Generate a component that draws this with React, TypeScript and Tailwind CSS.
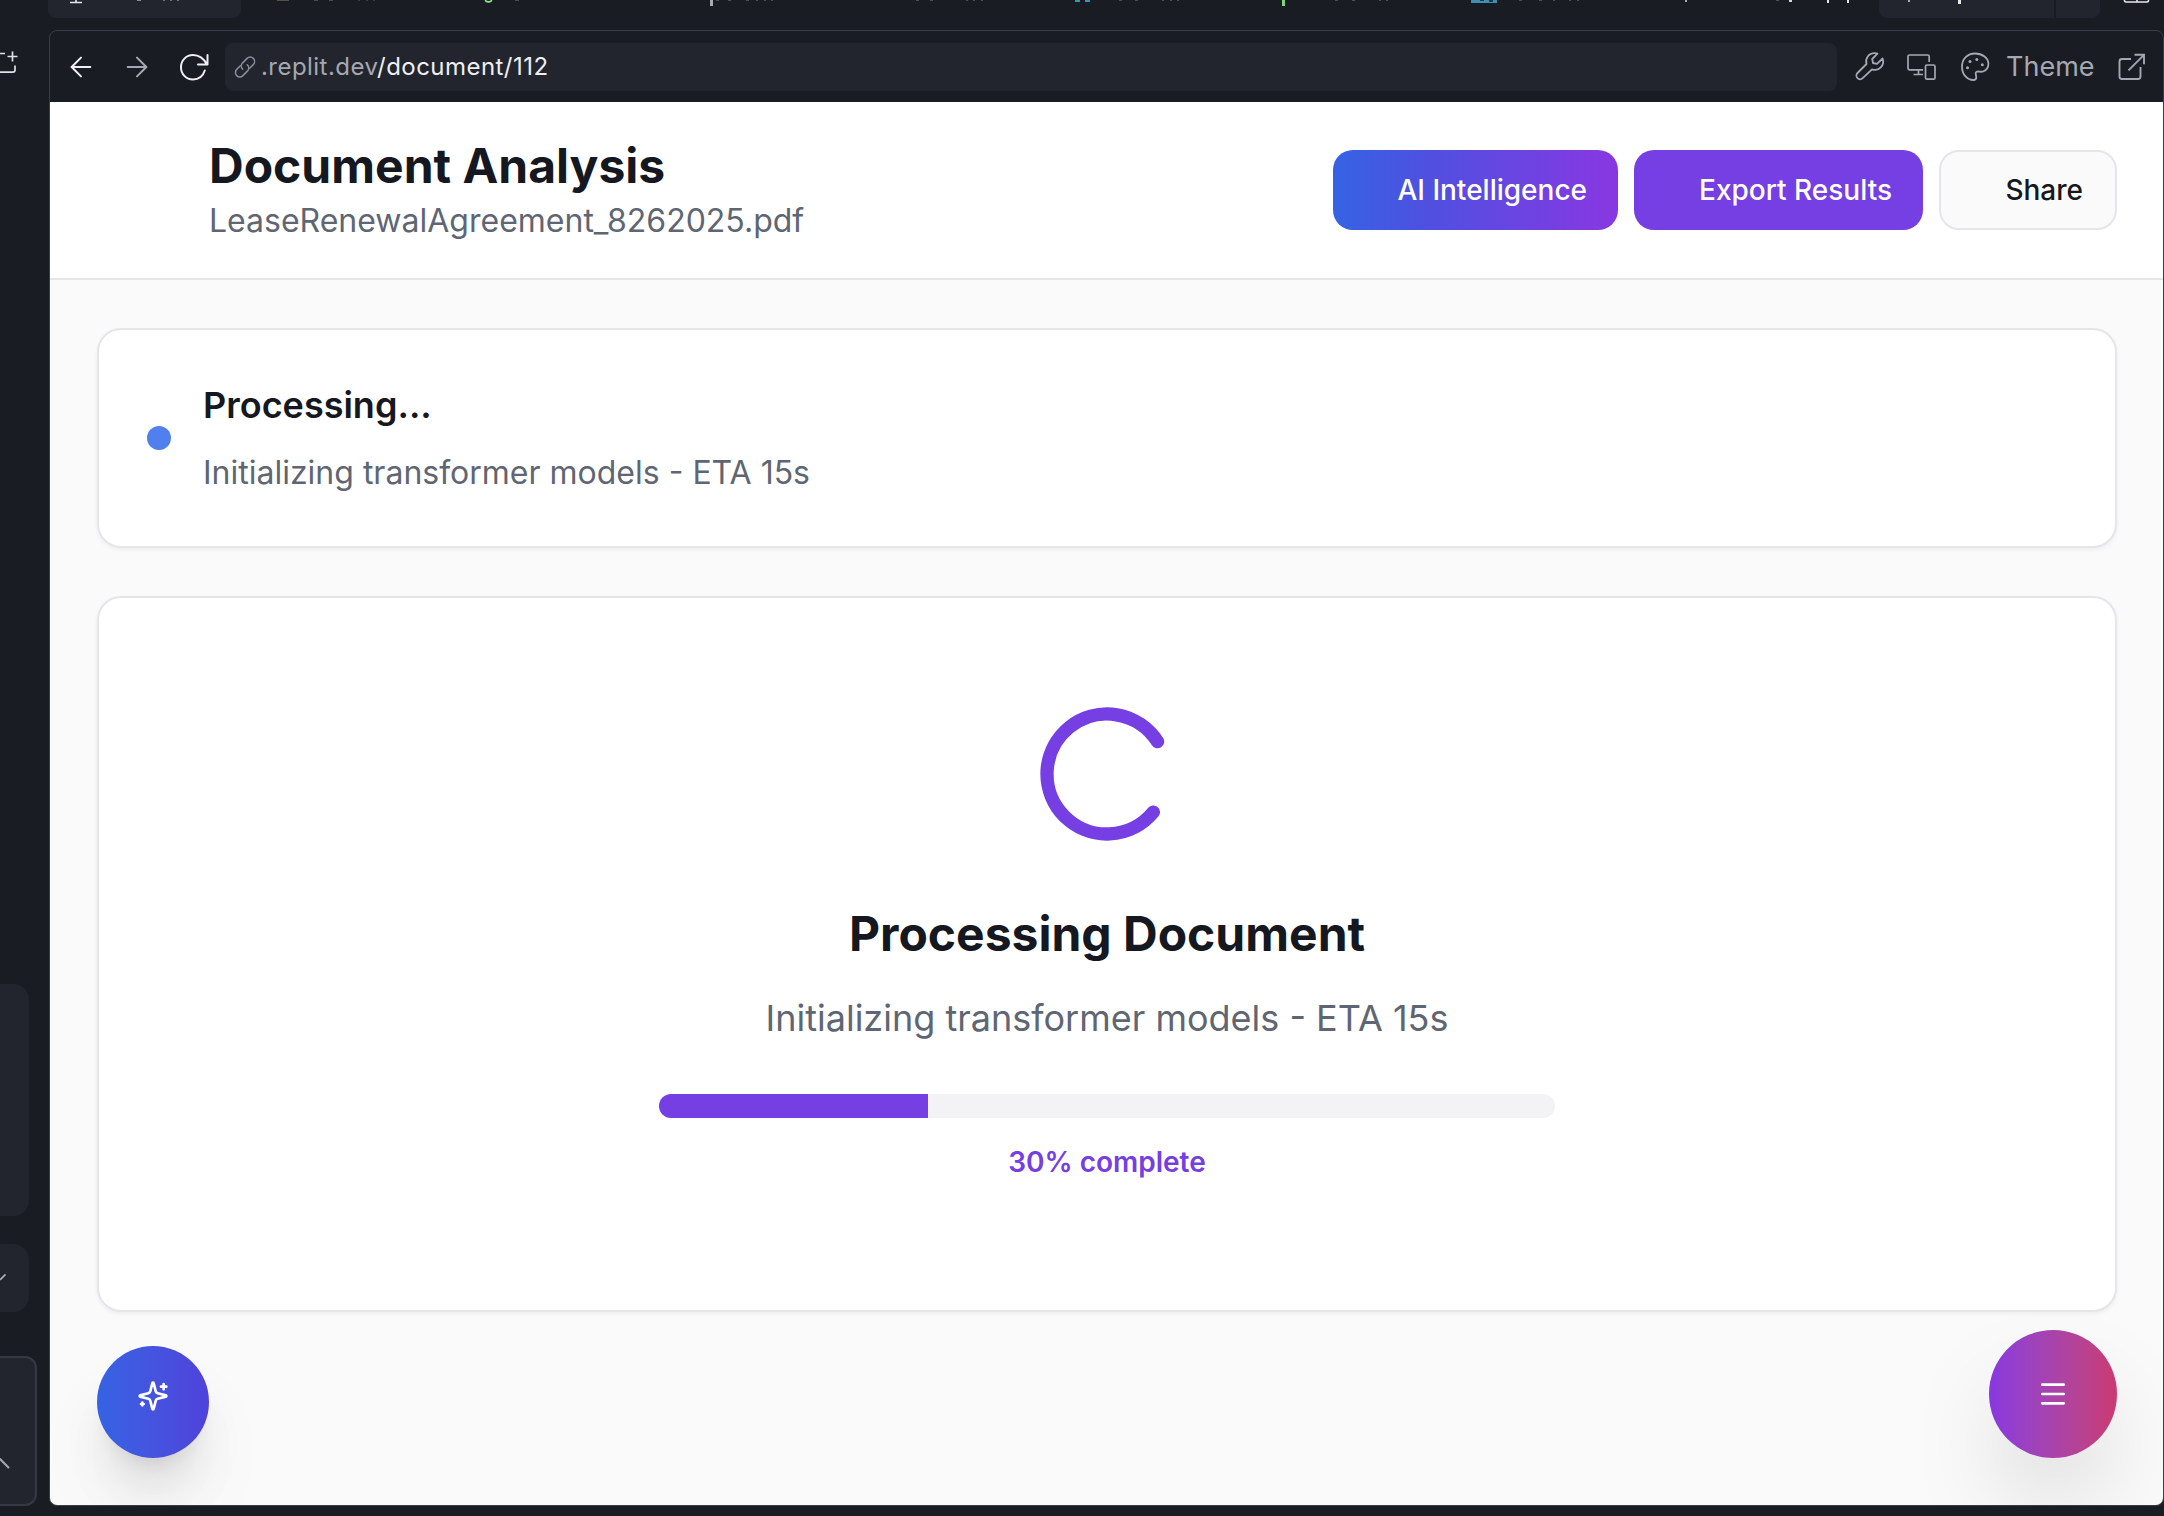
import React from "react";
import { ArrowLeft, ArrowRight, LoaderCircle, Menu } from "lucide-react";

type Speck = [x: number, width: number, height: number, color: string];

// Lower edges of the editor tab titles that scroll under the window's top edge.
const specks: Speck[] = [
  [137, 4, 1, "#8b8e97"],
  [163, 2, 1, "#6f727b"],
  [170, 2, 1, "#6f727b"],
  [177, 2, 1, "#6f727b"],
  [277, 12, 1, "#55543f"],
  [314, 4, 1, "#4a4d56"],
  [329, 4, 1, "#4a4d56"],
  [358, 2, 1, "#3b3e47"],
  [366, 2, 1, "#3b3e47"],
  [373, 2, 1, "#3b3e47"],
  [515, 4, 1, "#4a4d56"],
  [710, 3, 6, "#a9abb3"],
  [716, 3, 1, "#4a4d56"],
  [728, 3, 1, "#4a4d56"],
  [746, 3, 1, "#4a4d56"],
  [756, 2, 1, "#4a4d56"],
  [764, 2, 1, "#4a4d56"],
  [771, 2, 1, "#4a4d56"],
  [916, 3, 1, "#4a4d56"],
  [930, 3, 1, "#4a4d56"],
  [966, 2, 1, "#4a4d56"],
  [973, 2, 1, "#4a4d56"],
  [981, 2, 1, "#4a4d56"],
  [1075, 5, 2, "#3b93b8"],
  [1085, 5, 2, "#3b93b8"],
  [1119, 3, 1, "#4a4d56"],
  [1135, 3, 1, "#4a4d56"],
  [1162, 2, 1, "#4a4d56"],
  [1170, 2, 1, "#4a4d56"],
  [1177, 2, 1, "#4a4d56"],
  [1282, 3, 6, "#7ed67c"],
  [1335, 3, 1, "#4a4d56"],
  [1352, 3, 1, "#4a4d56"],
  [1379, 2, 1, "#4a4d56"],
  [1386, 2, 1, "#4a4d56"],
  [1471, 26, 3, "#3f8fb3"],
  [1480, 4, 1, "#1d3a4b"],
  [1489, 4, 2, "#1d3a4b"],
  [1519, 3, 1, "#4a4d56"],
  [1539, 3, 1, "#4a4d56"],
  [1553, 2, 1, "#4a4d56"],
  [1569, 2, 1, "#4a4d56"],
  [1577, 2, 1, "#4a4d56"],
  [1685, 2, 2, "#a9abb3"],
  [1776, 3, 1, "#4a4d56"],
  [1789, 3, 2, "#d5d6da"],
  [1827, 2, 3, "#e6e7ea"],
  [1847, 2, 3, "#e6e7ea"],
  [1908, 2, 2, "#a9abb3"],
  [1958, 3, 4, "#e6e7ea"],
];

function TabStrip() {
  return (
    <div className="relative flex h-[30px] shrink-0 items-start overflow-hidden">
      <div className="ml-12 h-[18px] w-[193px] rounded-b-lg bg-[#22252e]" />
      <div className="mr-16 ml-auto flex h-[18px] gap-0.5">
        <div className="w-[175px] rounded-bl-lg bg-[#22252e]" />
        <div className="w-11 rounded-br-lg bg-[#22252e]" />
      </div>
      <svg className="absolute top-0 left-0" width="2164" height="8" aria-hidden="true" fill="none">
        {specks.map(([x, w, h, c]) => (
          <rect key={x} x={x} y={0} width={w} height={h} fill={c} />
        ))}
        <path d="M76 0v2M70 2.500h12" stroke="#e6e7ea" strokeWidth="1.600" />
        <path d="M485.500 0c0 2.500 6 2.500 6 0" stroke="#8fe388" strokeWidth="1.600" />
        <path d="M2124.500 -2v2.500a1.500 1.500 0 0 0 1.500 1.500h21a1.500 1.500 0 0 0 1.500-1.500v-2.500M2137 0v2" stroke="#e6e7ea" strokeWidth="1.600" />
      </svg>
    </div>
  );
}

function Sidebar() {
  return (
    <aside className="flex w-[49px] shrink-0 flex-col">
      <svg className="mt-[18px]" width="20" height="30" viewBox="0 48 20 30" fill="none" stroke="#e0e1e5" strokeWidth="1.7">
        <path d="M0 53.5H5M12.5 51.5v10M7.5 56.5h10M15 65.5v4.5a2.2 2.2 0 0 1-2.2 2.2H0" />
      </svg>
      <div className="mt-[906px] h-[232px] w-[29px] rounded-r-2xl bg-[#22252e]" />
      <div className="mt-7 flex h-[68px] w-[29px] items-center rounded-r-2xl bg-[#22252e]">
        <svg width="10" height="12" viewBox="0 1271 10 12" fill="none" stroke="#b0b2ba" strokeWidth="1.6">
          <path d="M0 1279L5.5 1273.4" />
        </svg>
      </div>
      <div className="mt-11 h-[150px] w-[37px] rounded-r-xl border-2 border-l-0 border-[#363942] bg-[#22252e]">
        <svg className="mt-[98px]" width="12" height="16" viewBox="0 1456 12 16" fill="none" stroke="#a5a8b0" strokeWidth="2">
          <path d="M-1 1458L9 1468" />
        </svg>
      </div>
    </aside>
  );
}

function AddressBar() {
  return (
    <div className="flex h-[71px] shrink-0 items-center text-[#a5a8b1]">
      <ArrowLeft className="ml-[15px] size-8 shrink-0 text-[#eeeff2]" strokeWidth={1.5} />
      <ArrowRight className="ml-6 size-8 shrink-0" strokeWidth={1.5} />
      <svg className="ml-[25px] size-8 shrink-0" viewBox="178 50 32 32" fill="none" stroke="#eeeff2" strokeWidth="2">
        <path d="M207.5 54v9.5H198M207 63.5C203.5 57 199 54 193 54c-7 0-12 5.5-12 12.2S186 78.5 193 78.5c5.5 0 10-3.500 11.800-9" strokeLinejoin="round" strokeLinecap="round" />
      </svg>
      <div className="ml-[15px] flex h-12 w-[1612px] shrink-0 items-center rounded-lg bg-[#22252e] pl-2">
        <svg className="size-6 shrink-0" viewBox="0 0 24 24" fill="none" stroke="#8a8d97" strokeWidth="1.5" strokeLinecap="round">
          <path d="M9.700 14.300a4.500 4.500 0 0 1-.3-6.200l4.700-4.700a4.300 4.300 0 0 1 6.200 6.200l-3.700 3.700" />
          <path d="M14.300 9.700a4.500 4.500 0 0 1 .3 6.200l-4.700 4.700a4.300 4.300 0 0 1-6.200-6.200l3.700-3.700" />
        </svg>
        <span className="ml-1 text-2xl leading-none tracking-[0.46px] whitespace-pre">
          .replit.dev<span className="text-[#eeeff2]">/document/112</span>
        </span>
      </div>
      <svg className="ml-[17px] size-8 shrink-0" viewBox="1854 50 32 32" fill="none" stroke="currentColor" strokeWidth="1.8" strokeLinejoin="round">
        <path d="M1874.500 52.200a8.300 8.300 0 0 0-8 10.800L1857.500 72a3.600 3.600 0 0 0 5.200 5.200l9.300-8.900a8.300 8.300 0 0 0 10.600-10.800l-5.600 5.300-4-.8-.8-4 5.300-5.300a8 8 0 0 0-3-.5z" />
      </svg>
      <svg className="ml-5 size-8 shrink-0" viewBox="1906 50 32 32" fill="none" stroke="currentColor" strokeWidth="1.7" strokeLinejoin="round">
        <path d="M1923 68.800h-13.500a1.500 1.500 0 0 1-1.500-1.500V55.500a1.500 1.500 0 0 1 1.500-1.500h18.200a1.500 1.500 0 0 1 1.500 1.500V61M1918.500 69v4.500M1913.500 73.500h9.500" />
        <rect x="1925.500" y="64" width="9.500" height="14.200" rx="1.500" />
      </svg>
      <svg className="ml-[21px] size-8 shrink-0" viewBox="1959 50 32 32" fill="none" stroke="currentColor" strokeWidth="1.8">
        <path d="M1975 52.500c-7.500 0-13 5.500-13 13.200 0 7.500 5 13.300 11.300 13.300 2.200 0 3-1.200 3-2.800 0-2.300-1.800-4.200.2-5.400 1.800-1 4 .6 6.600-.3 3.200-1.200 5.300-4 5.300-7.500 0-6-5.900-10.500-13.400-10.500z" />
        <g fill="currentColor" stroke="none">
          <circle cx="1967.500" cy="66.700" r="1.500" />
          <circle cx="1970" cy="60.500" r="1.500" />
          <circle cx="1976.800" cy="58.500" r="1.500" />
          <circle cx="1982.300" cy="63.800" r="1.500" />
        </g>
      </svg>
      <span className="ml-[15px] w-[93px] shrink-0 text-[27px] leading-none">Theme</span>
      <svg className="ml-4 size-8 shrink-0" viewBox="2115 50 32 32" fill="none" stroke="currentColor" strokeWidth="1.900">
        <path d="M2131 58h-9a2.500 2.500 0 0 0-2.500 2.500V75.500a2.500 2.500 0 0 0 2.500 2.500h16a2.500 2.500 0 0 0 2.500-2.500V66M2134.500 53.800h9.500v9.500M2144 53.800L2128.500 69.300" />
      </svg>
    </div>
  );
}

function PageHeader() {
  return (
    <header className="flex h-[178px] shrink-0 items-center justify-between border-b-2 border-[#e5e5ea] bg-white pr-[46px] pl-[159px]">
      <div className="pt-0.5">
        <h1 className="text-5xl leading-[60px] font-bold">Document Analysis</h1>
        <p className="text-[32px] leading-[50px] text-[#5f6673]">LeaseRenewalAgreement_8262025.pdf</p>
      </div>
      <div className="flex gap-4 text-[28px] font-medium text-white">
        <button className="h-20 w-[285px] rounded-[20px] bg-linear-[90deg,#3563e3,#4f50e0_33%,#8937e1] pr-[31px] text-right">AI Intelligence</button>
        <button className="h-20 w-[289px] rounded-[20px] bg-[#753fe3] pr-[31px] text-right">Export Results</button>
        <button className="h-20 w-[178px] rounded-[20px] border-2 border-[#e5e5ea] bg-[#fafafa] pr-8 text-right text-[#151820]">Share</button>
      </div>
    </header>
  );
}

export default function App() {
  return (
    <div className="flex h-[1516px] w-[2164px] flex-col overflow-hidden bg-[#1a1c24] font-['Inter',sans-serif] text-[#151820]">
      <TabStrip />
      <div className="flex h-[1476px]">
        <Sidebar />
        <div className="relative flex flex-1 flex-col overflow-hidden rounded-lg border border-[#3a3d47]">
          <AddressBar />
          <div className="flex flex-1 flex-col bg-[#fafafa]">
            <PageHeader />
            <main className="flex flex-col gap-12 pt-12 pr-[46px] pl-[47px]">
              <section className="flex h-[220px] items-center gap-8 rounded-3xl border-2 border-[#e5e5ea] bg-white px-12 shadow-[0_2px_4px_rgba(0,0,0,0.05)]">
                <div className="size-6 rounded-full bg-[#4f80ee]" />
                <div className="flex flex-col gap-4">
                  <h3 className="text-4xl leading-[54px] font-semibold">Processing...</h3>
                  <p className="text-[32px] leading-[50px] text-[#5f6673]">Initializing transformer models - ETA 15s</p>
                </div>
              </section>
              <section className="flex h-[716px] flex-col items-center rounded-3xl border-2 border-[#e5e5ea] bg-white pt-24 shadow-[0_2px_4px_rgba(0,0,0,0.05)]">
                <LoaderCircle className="size-40 rotate-[39.4deg] text-[#753fe3]" />
                <h2 className="mt-12 text-5xl leading-[64px] font-bold">Processing Document</h2>
                <p className="mt-6 text-4xl leading-[56px] text-[#5f6673]">Initializing transformer models - ETA 15s</p>
                <div className="mt-12 h-6 w-[896px] overflow-hidden rounded-full bg-[#f3f3f6]">
                  <div className="h-full w-[30%] bg-[#753fe3]" />
                </div>
                <p className="mt-6 text-[28px] leading-10 font-semibold text-[#753fe3]">30% complete</p>
              </section>
            </main>
          </div>
          <button className="absolute bottom-[47px] left-[47px] flex size-28 items-center justify-center rounded-full bg-linear-to-r from-[#3563e3] to-[#4f42db] pb-3 text-white shadow-[0_40px_50px_-10px_rgba(0,0,0,0.1),0_16px_20px_-12px_rgba(0,0,0,0.1),0_50px_100px_-10px_rgba(0,0,0,0.06)]">
            <svg className="size-8" viewBox="0 0 24 24" fill="none" stroke="currentColor" strokeWidth="2" strokeLinecap="round" strokeLinejoin="round">
              <path d="M9.937 15.500A2 2 0 0 0 8.500 14.063l-6.135-1.582a.5.5 0 0 1 0-.962L8.500 9.936A2 2 0 0 0 9.937 8.500l1.582-6.135a.5.5 0 0 1 .963 0L14.063 8.500A2 2 0 0 0 15.500 9.937l6.135 1.581a.5.5 0 0 1 0 .964L15.500 14.063a2 2 0 0 0-1.437 1.437l-1.582 6.135a.5.5 0 0 1-.963 0z" />
              <path d="M20 3v4M22 5h-4M4 17v2M5 18H3" />
            </svg>
          </button>
          <button className="absolute right-[46px] bottom-[47px] flex size-32 items-center justify-center rounded-full bg-linear-to-r from-[#8937e1] to-[#cb3970] text-white shadow-[0_50px_100px_-24px_rgba(0,0,0,0.25)]">
            <Menu className="size-8" />
          </button>
        </div>
      </div>
    </div>
  );
}
